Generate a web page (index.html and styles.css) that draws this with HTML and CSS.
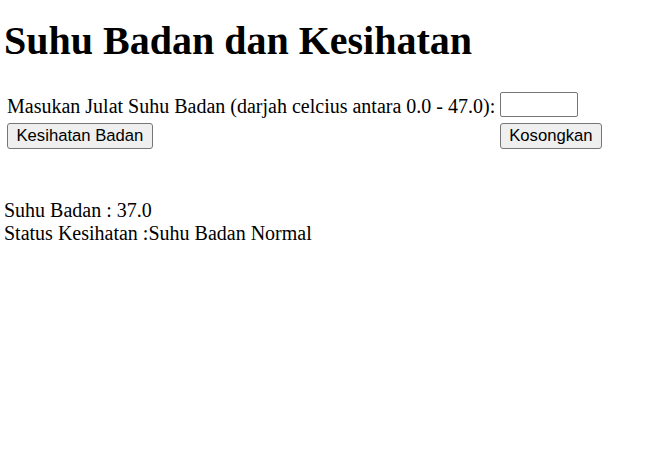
FILE: index.html
```html
<!DOCTYPE html>
<html>
<head>
<meta charset="utf-8">
<title>Suhu Badan dan Kesihatan</title>
<link rel="stylesheet" href="styles.css">
</head>
<body>
<h1 class="title">Suhu Badan dan Kesihatan</h1>
<form class="form">
<table class="tbl">
<tr>
<td class="label">Masukan Julat Suhu Badan (darjah celcius antara 0.0 - 47.0):</td>
<td><input class="field" type="text"></td>
</tr>
<tr>
<td><button class="btn" type="button">Kesihatan Badan</button></td>
<td><button class="btn btn-reset" type="button">Kosongkan</button></td>
</tr>
</table>
</form>
<div class="result">
<div>Suhu Badan : 37.0</div>
<div>Status Kesihatan :Suhu Badan Normal</div>
</div>
</body>
</html>
```
FILE: styles.css
```css
body {
  margin: 0 4px;
  font-family: "Liberation Serif", "Times New Roman", serif;
  font-size: 20px;
  color: #000;
  background: #fff;
}
.title {
  font-size: 40px;
  font-weight: bold;
  margin: 17px 0 25px;
}
.form {
  margin: 0;
}
.tbl {
  border-spacing: 2px;
}
.tbl td {
  padding: 1px;
}
.tbl td.label {
  padding: 3px 2px 0 1px;
}
.field {
  display: block;
  box-sizing: border-box;
  width: 78px;
  height: 25px;
  margin: 0;
  border: 1px solid #767676;
  border-radius: 2px;
  padding: 1px 3px;
  font-family: "Liberation Sans", Arial, sans-serif;
  font-size: 16.67px;
}
.btn {
  display: block;
  box-sizing: border-box;
  height: 26px;
  margin: 2px 0 0;
  padding: 0 8.5px;
  border: 1px solid #767676;
  border-radius: 3px;
  background: #efefef;
  color: #000;
  font-family: "Liberation Sans", Arial, sans-serif;
  font-size: 16.67px;
}
.btn-reset {
  padding: 0 8px;
}
.result {
  margin-top: 47px;
}
```
